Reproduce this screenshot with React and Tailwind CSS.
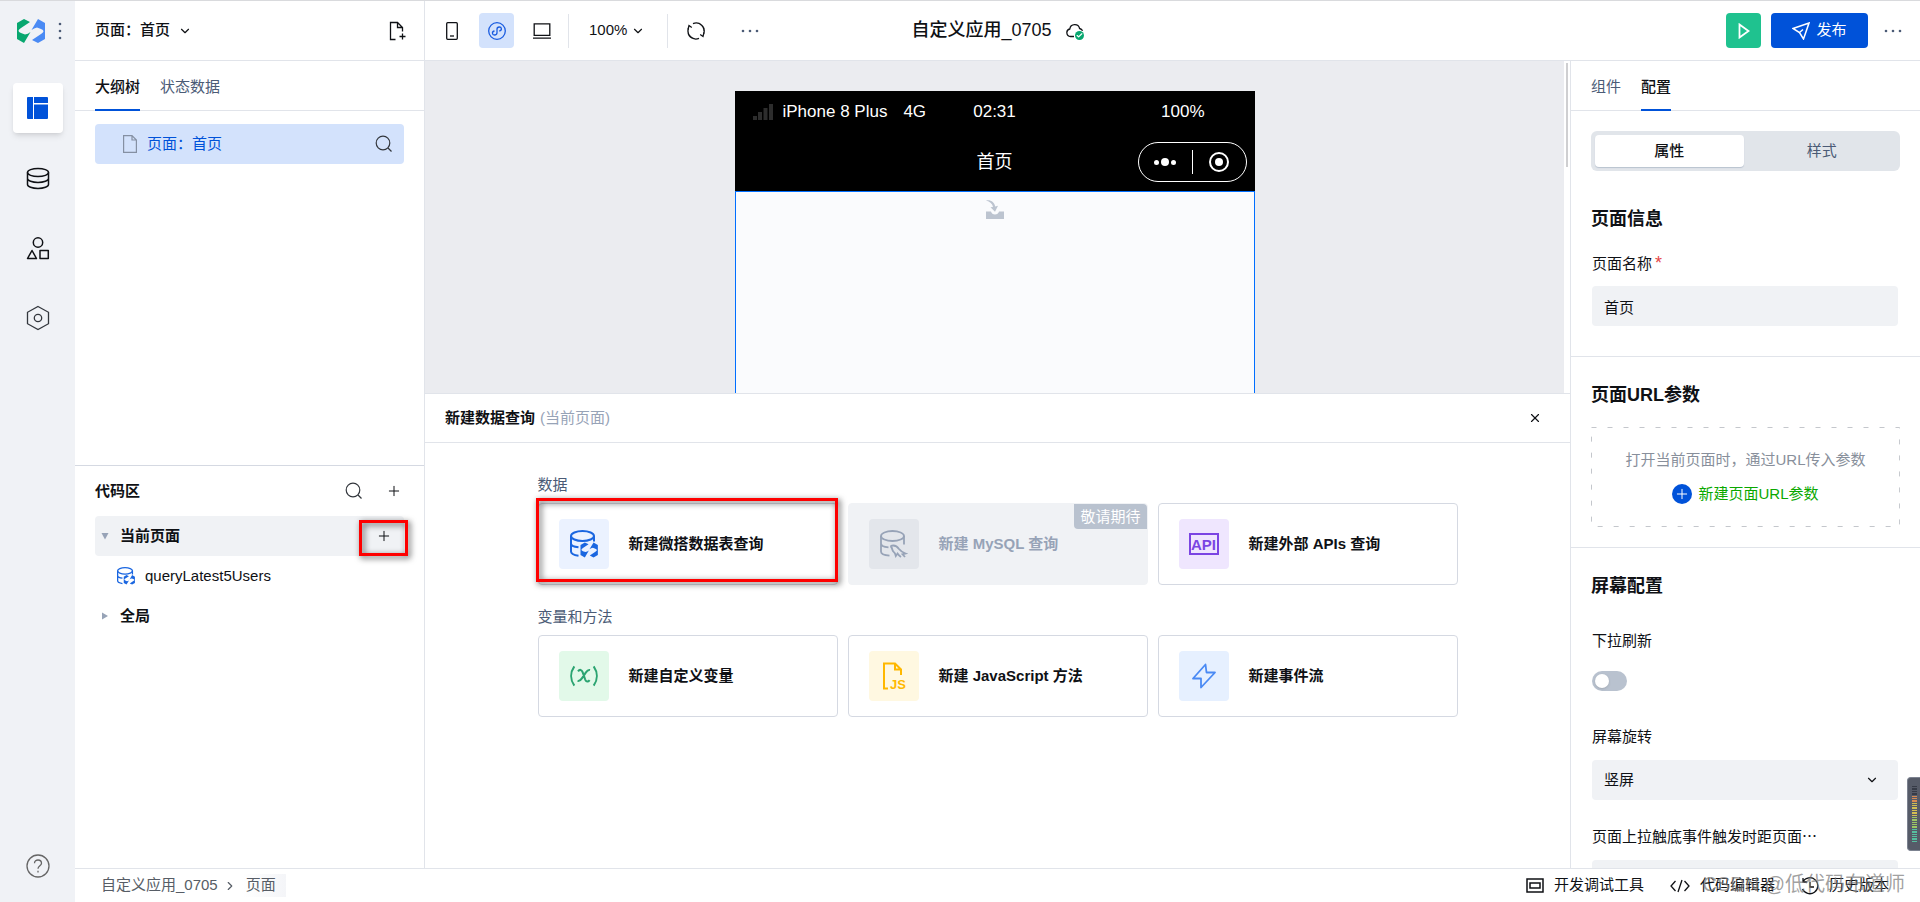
import { useState } from "react";
import { Check, ChevronDown, ChevronRight, Plus, X } from "lucide-react";

const Icon = ({ size = 24, width, height, box = 24, stroke = 1.5, className, children }) => (
  <svg
    width={width || size}
    height={height || size}
    viewBox={typeof box === "string" ? box : `0 0 ${box} ${box}`}
    fill="none"
    stroke="currentColor"
    strokeWidth={stroke}
    className={className}
    aria-hidden="true"
  >
    {children}
  </svg>
);

const halfMark = "M0 4L7 0L13 3L4 9Q-1 12 4 14L8 15.500Q11 15 13.500 13L7 24L0 20Z";

const Logo = () => (
  <Icon width={28} height={24} box="0 0 28 24" stroke={0}>
    <path d={halfMark} fill="#07a76f" />
    <path d={halfMark} fill="#4a8af4" transform="rotate(180 14 12)" />
  </Icon>
);

const SearchIcon = () => (
  <Icon size={18} box={18} stroke={1.2}>
    <circle cx="8" cy="8" r="6.800" />
    <path d="M13 13l3.500 3.500" />
  </Icon>
);

const Dots = () => (
  <Icon width={18} height={4} box="0 0 18 4" stroke={0}>
    <g fill="#4b5b76">
      <circle cx="2" cy="2" r="1.300" />
      <circle cx="9" cy="2" r="1.300" />
      <circle cx="16" cy="2" r="1.300" />
    </g>
  </Icon>
);

const WedaDbIcon = ({ size = 28 }) => (
  <Icon size={size} box={28} stroke={2}>
    <ellipse cx="12.500" cy="6" rx="11.500" ry="5" />
    <path d="M1 6v15.500c0 2 3 3.600 7.500 4.200M24 6v5.500M1 13.500c0 1.800 3 3.300 7.500 3.800" />
    <g transform="translate(10.500 12.500) scale(.62)" fill="currentColor" stroke="none">
      <path d={halfMark} />
      <path d={halfMark} transform="rotate(180 14 12)" />
    </g>
  </Icon>
);

const MysqlIcon = () => (
  <Icon size={28} box={28} stroke={1.800}>
    <ellipse cx="12.500" cy="6" rx="11.500" ry="5" />
    <path d="M1 6v15.500c0 2 3.500 3.800 8.500 4.200M24 6v8.500M1 13.500c0 1.800 3 3.500 7.500 3.900" />
    <path d="M10.500 16c3-1 6.500 0 8.500 3 1.500 2 3 3 6.500 4.500l-3 .8 2.500 2.700M10.500 16c1 1 1.500 2 2 4 .4 2 1.500 1.500 2.500 3.500l.8 2.500 1.700-2.500c1 1.500 2 2.500 3.500 3.500" />
  </Icon>
);

const VariableIcon = () => (
  <Icon width={30} height={24} box="0 0 32 26" stroke={2.200}>
    <path d="M5.500 2.500C1 9 1 17 5.500 23.500M26.500 2.500c4.500 6.500 4.500 14.500 0 21" />
    <path d="M9.500 8c1.800-2.500 4-2 5 .8l2.800 8c1 2.500 3 3 4.800.6M22.500 6.500c-1.600-.5-3 .5-4.600 2.800l-4 6c-1.600 2.500-3 3.500-4.900 3" />
  </Icon>
);

const JsFileIcon = () => (
  <Icon width={26} height={28} box="0 0 26 28" stroke={2}>
    <path d="M7 26.500H3V1.500h11l6 6V13M14 1.500v6h6" />
    <text x="9" y="27" fontSize="13" fontWeight="bold" fontFamily="Liberation Sans, sans-serif" fill="currentColor" stroke="none">JS</text>
  </Icon>
);

const FlowIcon = () => (
  <Icon size={26} box={26} stroke={1.800}>
    <path d="M14.500 1.500L2 15.500h8v9L24 9.500h-8.500z" strokeLinejoin="round" />
  </Icon>
);

const ApiIcon = () => (
  <span className="flex h-[22px] w-[30px] items-center justify-center border-2 border-current text-[15px] leading-none font-bold">API</span>
);

const railItems = [
  {
    name: "页面设计",
    icon: (
      <Icon size={22} box={22} stroke={0}>
        <g fill="#0052d9">
          <path d="M1 0h5v22H1a1 1 0 0 1-1-1V1a1 1 0 0 1 1-1zM7 0h13a1 1 0 0 1 1 1v5H7zM7 7.500h14V21a1 1 0 0 1-1 1H7z" />
        </g>
      </Icon>
    ),
  },
  {
    name: "数据源",
    icon: (
      <Icon size={24}>
        <ellipse cx="12" cy="6.500" rx="10.500" ry="4" />
        <path d="M1.500 6.500v12c0 2.200 4.700 4 10.500 4s10.500-1.800 10.500-4v-12M1.500 12.500c0 2.200 4.700 4 10.500 4s10.500-1.800 10.500-4" />
      </Icon>
    ),
  },
  {
    name: "组件库",
    icon: (
      <Icon size={24}>
        <circle cx="12" cy="6.500" r="4.700" />
        <path d="M6 14.500l4.500 8h-9zM14 14.500h8.300v8H14z" strokeLinejoin="round" />
      </Icon>
    ),
  },
  {
    name: "设置",
    icon: (
      <Icon size={26} box={26} stroke={1.300} className="text-[#33373d]">
        <path d="M13 1.500l10.500 5.800v11.400L13 24.500 2.500 18.700V7.300z" />
        <circle cx="13" cy="13" r="3.700" />
      </Icon>
    ),
  },
];

const queryCards = [
  { title: "新建微搭数据表查询", tile: "bg-[#ebf2ff] text-[#1a66e0]", icon: <WedaDbIcon />, marked: true },
  { title: "新建 MySQL 查询", tile: "bg-[#e3e6eb] text-[#97a3b7]", icon: <MysqlIcon />, soon: true },
  { title: "新建外部 APIs 查询", tile: "bg-[#efe6fe] text-[#7b45e3]", icon: <ApiIcon /> },
];

const codeCards = [
  { title: "新建自定义变量", tile: "bg-[#e2f9e9] text-[#2ba471]", icon: <VariableIcon /> },
  { title: "新建 JavaScript 方法", tile: "bg-[#fff8e1] text-[#ffb800]", icon: <JsFileIcon /> },
  { title: "新建事件流", tile: "bg-[#e6f0ff] text-[#4a8af4]", icon: <FlowIcon /> },
];

const redBox = "pointer-events-none absolute border-3 border-[#fe0000] drop-shadow-[2px_2px_3px_rgba(0,0,0,0.7)]";

function Card({ title, tile, icon, soon, marked }) {
  return (
    <div className="relative">
      <button
        disabled={soon}
        className={`flex h-[82px] w-full items-center gap-5 rounded border px-5 font-bold ${
          soon ? "border-[#f0f2f5] bg-[#f0f2f5] text-[#97a3b7]" : "border-[#d5d9e2] bg-white"
        }`}
      >
        <span className={`flex size-[50px] items-center justify-center rounded font-normal ${tile}`}>{icon}</span>
        {title}
      </button>
      {soon && (
        <span className="absolute top-px right-px h-[25px] rounded-tr rounded-bl bg-[#b9c2cf] px-[6px] leading-[25px] text-white">
          敬请期待
        </span>
      )}
      {marked && <span className={`${redBox} -top-[5px] -left-[2px] h-[84px] w-[302px]`} />}
    </div>
  );
}

function Tabs({ items, active }) {
  return (
    <div className="flex h-[50px] shrink-0 gap-5 border-b border-[#e1e4ea] px-5">
      {items.map((item) => (
        <button
          key={item}
          className={`-mb-px border-b-2 pt-1 ${item === active ? "border-[#0052d9] font-medium" : "border-transparent text-[#4b5b76]"}`}
        >
          {item}
        </button>
      ))}
    </div>
  );
}

function Header() {
  return (
    <header className="grid h-[60px] shrink-0 grid-cols-[1fr_auto_1fr] items-center border-b border-[#e1e4ea]">
      <div className="flex h-full items-center">
        <div className="flex h-full w-[350px] items-center justify-between border-r border-[#e1e4ea] pr-[18px] pl-5">
          <button className="flex items-center gap-2 font-medium">
            页面：首页
            <ChevronDown size={14} />
          </button>
          <button aria-label="新建页面">
            <Icon size={20} box={20} stroke={1.300}>
              <path d="M9.500 18.500H4.500v-17h7l5 5v4M11.500 1.500v5h5M13.500 15.500h6M16.500 12.500v6" />
            </Icon>
          </button>
        </div>
        <div className="flex items-center pl-[9px]">
          <button aria-label="手机" className="flex size-[35px] items-center justify-center">
            <Icon width={12} height={18} box="0 0 12 18" stroke={1.300}>
              <rect x="0.700" y="0.700" width="10.600" height="16.600" rx="1" />
              <path d="M4 14h4" />
            </Icon>
          </button>
          <button aria-label="小程序" className="ml-[10px] flex size-[35px] items-center justify-center rounded bg-[#d3e2fc] text-[#1a5ce0]">
            <Icon size={18} box={18} stroke={1.300}>
              <circle cx="9" cy="9" r="8.300" />
              <path d="M6.500 9c-3 .5-2.500 4 0 4 1.500 0 2.500-1 2.500-2.500V7.200C9 5.800 10 5 11.300 5c2.600 0 3 3.500 0 4" />
            </Icon>
          </button>
          <button aria-label="电脑" className="ml-[10px] flex size-[35px] items-center justify-center">
            <Icon width={18} height={16} box="0 0 18 16" stroke={1.300}>
              <path d="M1.200.8h15.600v11.500H1.200zM0 15.200h18" />
            </Icon>
          </button>
          <span className="ml-[9px] h-[34px] w-px bg-[#e1e4ea]" />
          <button className="ml-5 flex items-center gap-1">
            100%
            <ChevronDown size={14} />
          </button>
          <span className="ml-[22px] h-[34px] w-px bg-[#e1e4ea]" />
          <button aria-label="刷新" className="ml-[19px]">
            <Icon size={18} box={18} stroke={1.300}>
              <path d="M6 1.600a8 8 0 0 1 10.700 10M12 16.400A8 8 0 0 1 1.400 6.500M5.300 16.200A8 8 0 0 1 1 9M12.800 1.900A8 8 0 0 1 17 9" />
              <path d="M4.800 5.500L2 3.500 1 7.500M13.200 12.500l2.800 2 1-4" />
            </Icon>
          </button>
          <button aria-label="更多" className="ml-9">
            <Dots />
          </button>
        </div>
      </div>
      <div className="flex items-center gap-[14px]">
        <h1 className="text-[18px] font-medium">自定义应用_0705</h1>
        <span className="relative">
          <Icon width={18} height={16} box="0 0 18 16" stroke={1.300}>
            <path d="M8 13.500H4.500a3.800 3.800 0 0 1-.7-7.500 5 5 0 0 1 9.800-.5c1.500.3 2.500 1.200 3 2.200" />
          </Icon>
          <span className="absolute right-0 -bottom-px flex size-[9px] items-center justify-center rounded-full bg-[#07a76f] text-white">
            <Check size={7} strokeWidth={4} />
          </span>
        </span>
      </div>
      <div className="flex items-center justify-end gap-[10px] pr-[18px]">
        <button aria-label="预览" className="flex size-[35px] items-center justify-center rounded bg-[#1fc28f] text-white">
          <Icon width={12} height={16} box="0 0 12 16" stroke={1.800}>
            <path d="M1.500 1.500l9 6.500-9 6.500z" />
          </Icon>
        </button>
        <button className="flex h-[35px] w-[97px] items-center justify-center gap-[6px] rounded bg-[#0052d9] text-white">
          <Icon size={18} box={18} stroke={1.500}>
            <path d="M1 6.500L17 1l-5.500 16-4-6.500zM7.500 10.500L11 7.500" />
          </Icon>
          发布
        </button>
        <button aria-label="更多操作" className="ml-[6px]">
          <Dots />
        </button>
      </div>
    </header>
  );
}

function LeftPanel() {
  return (
    <div className="flex w-[350px] shrink-0 flex-col border-r border-[#e1e4ea]">
      <Tabs items={["大纲树", "状态数据"]} active="大纲树" />
      <div className="flex-1 px-5 pt-[13px]">
        <div className="flex h-10 items-center rounded bg-[#d3e2fc] pr-[11px] pl-7 text-[#0052d9]">
          <Icon width={14} height={18} box="0 0 14 18" stroke={1.200} className="mr-[10px] text-[#8590a3]">
            <path d="M.6.6h8.400l4.400 4.400v12.400H.6zM9 .6V5h4.400" />
          </Icon>
          <span className="flex-1">页面：首页</span>
          <button aria-label="搜索组件" className="text-[#33373d]">
            <SearchIcon />
          </button>
        </div>
      </div>

      <div className="h-[403px] shrink-0 border-t border-[#d5d9e2] px-5">
        <div className="flex h-[50px] items-center pr-[2px]">
          <h2 className="flex-1 font-bold">代码区</h2>
          <button aria-label="搜索代码" className="mr-[23px] text-[#33373d]">
            <SearchIcon />
          </button>
          <button aria-label="新建代码">
            <Plus size={16} strokeWidth={1.5} />
          </button>
        </div>
        <div className="relative flex h-10 items-center rounded bg-[#f0f2f5] pr-3 pl-[6px] font-bold">
          <span className="w-[19px] text-[#97a3b7]">
            <Icon size={8} box={8} stroke={0}>
              <path d="M.5 1h7L4 7.500z" fill="currentColor" />
            </Icon>
          </span>
          <span className="flex-1">当前页面</span>
          <button aria-label="新建查询">
            <Plus size={16} strokeWidth={1.5} />
          </button>
          <span className={`${redBox} top-1 -right-1 h-9 w-[49px]`} />
        </div>
        <div className="flex h-10 items-center gap-[10px] pl-[22px]">
          <span className="text-[#1a66e0]">
            <WedaDbIcon size={18} />
          </span>
          queryLatest5Users
        </div>
        <div className="flex h-10 items-center pl-[6px] font-bold">
          <span className="w-[19px] text-[#97a3b7]">
            <Icon size={8} box={8} stroke={0}>
              <path d="M1 .5v7L7 4z" fill="currentColor" />
            </Icon>
          </span>
          全局
        </div>
      </div>
    </div>
  );
}

function Phone() {
  return (
    <div className="flex w-[520px] flex-col">
      <div className="bg-black text-white">
        <div className="relative flex h-[42px] items-center px-[18px] text-[17px]">
          <Icon width={20} height={16} box="0 0 20 16" stroke={0} className="mr-[10px]">
            <path d="M0 12h4v4H0zM5 8h4v8H5zM10.500 4h4v12h-4zM16 0h4v16h-4z" fill="#2d2d2d" />
          </Icon>
          <span className="mr-4">iPhone 8 Plus</span>
          <span>4G</span>
          <span className="absolute inset-x-0 text-center">02:31</span>
          <span className="ml-auto mr-8">100%</span>
        </div>
        <div className="relative flex h-[58px] items-center justify-center text-[18px]">
          首页
          <span className="absolute top-[9px] right-2 flex h-10 w-[109px] items-center rounded-full border border-white">
            <span className="flex flex-1 items-center justify-center gap-[2px]">
              <i className="size-[5px] rounded-full bg-white" />
              <i className="size-[8px] rounded-full bg-white" />
              <i className="size-[5px] rounded-full bg-white" />
            </span>
            <span className="h-6 w-px bg-white" />
            <span className="flex flex-1 justify-center">
              <Icon size={20} box={20} stroke={2}>
                <circle cx="10" cy="10" r="9" />
                <circle cx="10" cy="10" r="4" fill="currentColor" stroke="none" />
              </Icon>
            </span>
          </span>
        </div>
      </div>
      <div className="flex flex-1 justify-center border border-b-0 border-[#006eff] bg-[#fafbfd] pt-2">
        <Icon width={18} height={19} box="0 0 18 19" stroke={0}>
          <path d="M0 11.500h5c.5 2 2 3 4 3s3.500-1 4-3h5V19H0zM0 .5c5-1 8.500 2 9.200 6l2.800-.7-3 6-4.500-4.500 2.500-.3C6.500 4 4 1.500 0 .5z" fill="#bcc4d0" />
        </Icon>
      </div>
    </div>
  );
}

function QueryPanel() {
  return (
    <section className="h-[475px] shrink-0 border-t border-[#e1e4ea] bg-white">
      <div className="flex h-[49px] items-center border-b border-[#e1e4ea] px-5">
        <h2 className="font-bold">新建数据查询</h2>
        <span className="ml-[5px] flex-1 text-[#97a3b7]">(当前页面)</span>
        <button aria-label="关闭" className="mr-2">
          <X size={14} />
        </button>
      </div>
      <div className="mx-auto max-w-[920px] pt-8">
        <h3 className="mb-2 leading-5 text-[#4b5b76]">数据</h3>
        <div className="grid grid-cols-3 gap-[10px]">
          {queryCards.map((card) => (
            <Card key={card.title} {...card} />
          ))}
        </div>
        <h3 className="mt-[22px] mb-2 leading-5 text-[#4b5b76]">变量和方法</h3>
        <div className="grid grid-cols-3 gap-[10px]">
          {codeCards.map((card) => (
            <Card key={card.title} {...card} />
          ))}
        </div>
      </div>
    </section>
  );
}

function ConfigPanel() {
  const [pageName, setPageName] = useState("首页");
  const [refresh, setRefresh] = useState(false);

  return (
    <div className="flex w-[350px] shrink-0 flex-col overflow-hidden border-l border-[#e1e4ea]">
      <Tabs items={["组件", "配置"]} active="配置" />

      <section className="shrink-0 border-b border-[#e1e4ea] px-5 pt-5 pb-[30px]">
        <div className="grid h-10 grid-cols-2 gap-1 rounded-md bg-[#e1e5ea] p-1">
          <button className="rounded-sm bg-white font-medium shadow-[0_1px_1px_#b9c2cf]">属性</button>
          <button className="text-[#4b5b76]">样式</button>
        </div>
        <h2 className="mt-[34px] text-[18px] leading-7 font-bold">页面信息</h2>
        <div className="mt-[19px] pr-[2px] pl-px">
          <label htmlFor="page-name" className="block leading-6">
            页面名称<span className="ml-[3px] text-[18px] leading-none text-[#e54545]">*</span>
          </label>
          <input
            id="page-name"
            value={pageName}
            onChange={(e) => setPageName(e.target.value)}
            className="mt-[10px] h-10 w-full rounded bg-[#f0f2f5] px-3 outline-none"
          />
        </div>
      </section>

      <section className="shrink-0 border-b border-[#e1e4ea] px-5 pt-6 pb-5">
        <h2 className="text-[18px] leading-7 font-bold">页面URL参数</h2>
        <div className="relative mt-[18px] flex h-[100px] flex-col items-center gap-[10px] pt-[21px] leading-6">
          <svg className="pointer-events-none absolute inset-0 size-full" aria-hidden="true">
            <rect x="0.500" y="0.500" width="99.700%" height="99" fill="none" stroke="#c4c7cc" strokeDasharray="5 11" />
          </svg>
          <p className="text-[#888f9b]">打开当前页面时，通过URL传入参数</p>
          <a href="#" className="flex items-center gap-[6px] text-[#0aa800]">
            <span className="flex size-5 items-center justify-center rounded-full bg-[#0052d9] text-white">
              <Plus size={16} strokeWidth={1.5} />
            </span>
            新建页面URL参数
          </a>
        </div>
      </section>

      <section className="shrink-0 px-5 pt-6">
        <h2 className="text-[18px] leading-7 font-bold">屏幕配置</h2>
        <div className="mt-[29px] pr-[2px] pl-px">
          <label htmlFor="pull-refresh" className="block leading-6">下拉刷新</label>
          <input
            id="pull-refresh"
            type="checkbox"
            checked={refresh}
            onChange={() => setRefresh(!refresh)}
            className="mt-[18px] block h-5 w-[35px] appearance-none rounded-full bg-[#b9c2cf] p-[3px] before:block before:size-[14px] before:rounded-full before:bg-white before:shadow checked:bg-[#0052d9] checked:before:ml-auto"
          />
          <label htmlFor="rotation" className="mt-[34px] block leading-6">屏幕旋转</label>
          <div className="relative mt-[11px]">
            <select id="rotation" className="h-10 w-full appearance-none rounded bg-[#f0f2f5] px-3 outline-none">
              <option>竖屏</option>
              <option>横屏</option>
            </select>
            <ChevronDown size={14} className="pointer-events-none absolute top-[13px] right-[19px]" />
          </div>
          <label htmlFor="reach-bottom" className="mt-[25px] block leading-6">页面上拉触底事件触发时距页面⋯</label>
          <input id="reach-bottom" className="mt-[11px] h-10 w-full rounded bg-[#f0f2f5] px-3 outline-none" />
        </div>
      </section>
    </div>
  );
}

function Footer() {
  return (
    <footer className="flex h-[34px] shrink-0 items-center border-t border-[#e1e4ea] pr-[31px] pl-[26px]">
      <nav className="flex flex-1 items-center gap-[5px] text-[#575d66]">
        <a href="#">自定义应用_0705</a>
        <ChevronRight size={14} />
        <a href="#" className="bg-linear-to-r from-white to-[#f4f5f8] pr-[10px] pl-1">页面</a>
      </nav>
      <button className="flex items-center gap-[10px]">
        <Icon width={18} height={15} box="0 0 18 15" stroke={1.500}>
          <path d="M1 1h16v13H1zM4 5h10v5H4z" />
        </Icon>
        开发调试工具
      </button>
      <button className="ml-[26px] flex items-center gap-[10px]">
        <Icon width={20} height={14} box="0 0 20 14" stroke={1.300}>
          <path d="M5.500 2L1 7l4.500 5M14.500 2L19 7l-4.500 5M12 1L8 13" />
        </Icon>
        代码编辑器
      </button>
      <button className="ml-[26px] flex items-center gap-[10px]">
        <Icon size={18} box={18} stroke={1.300}>
          <path d="M2 4.500A8 8 0 1 1 1.500 12M2 1v4h4M9 5v5h4" />
        </Icon>
        历史版本
      </button>
    </footer>
  );
}

// Small desktop meter stuck to the window edge
const levels = [
  ...Array(4).fill("bg-[#363b47]"),
  ...Array(3).fill("bg-[#d98b52]"),
  ...Array(6).fill("bg-[#d2bf52]"),
  ...Array(5).fill("bg-[#9cc764]"),
  ...Array(6).fill("bg-[#55c0a0]"),
];

export default function App() {
  return (
    <div className="relative flex h-screen overflow-hidden border-t border-[#d9dadd] bg-white font-['Liberation_Sans','Noto_Sans_CJK_SC',sans-serif] text-[15px] text-[#0f1115]">
      <aside className="flex w-[75px] shrink-0 flex-col items-center bg-[#f0f2f6]">
        <div className="flex h-[60px] w-full items-center gap-[6px] pl-[17px]">
          <Logo />
          <span className="rotate-90">
            <Dots />
          </span>
        </div>
        <div className="mt-[22px] flex flex-col gap-5">
          {railItems.map(({ name, icon }, i) => (
            <button
              key={name}
              aria-label={name}
              className={`flex size-[50px] items-center justify-center rounded ${i === 0 ? "bg-white shadow-md" : ""}`}
            >
              {icon}
            </button>
          ))}
        </div>
        <button aria-label="帮助" className="mt-auto mb-6 text-[#666]">
          <Icon size={24} stroke={1.300}>
            <circle cx="12" cy="12" r="11" />
            <path d="M8.500 9.200c0-4.300 7-4.300 7 0 0 2.500-3.500 2.600-3.500 5.600M12 16.800v1.700" />
          </Icon>
        </button>
      </aside>

      <div className="flex min-w-0 flex-1 flex-col">
        <Header />
        <div className="flex min-h-0 flex-1">
          <LeftPanel />
          <main className="flex min-w-0 flex-1 flex-col">
            <div className="flex min-h-0 flex-1 bg-[#ebecf0]">
              <div className="flex flex-1 justify-center pt-[30px]">
                <Phone />
              </div>
              <div className="w-[6px] bg-white pt-[2px] pl-[2px]">
                <div className="h-[104px] w-[2px] bg-[#cfcfd1]" />
              </div>
            </div>
            <QueryPanel />
          </main>
          <ConfigPanel />
        </div>
        <Footer />
      </div>

      <div className="absolute right-0 bottom-[51px] flex h-[74px] w-[13px] flex-col gap-px rounded-l border border-r-0 border-[#7c8290] bg-[#565b68] py-2 pl-1">
        {levels.map((level, i) => (
          <i key={i} className={`min-h-px w-[5px] flex-1 ${level}`} />
        ))}
      </div>
      <p className="pointer-events-none absolute right-[15px] bottom-1 text-[20px] leading-7 text-[#777]/70">CSDN @低代码布道师</p>
    </div>
  );
}
